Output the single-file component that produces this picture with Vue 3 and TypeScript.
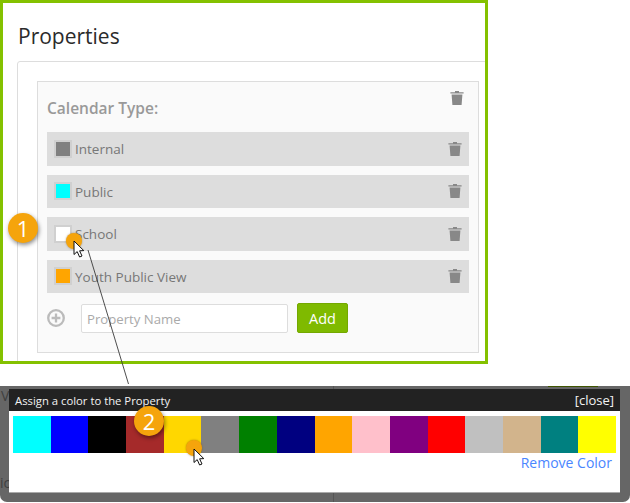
<script setup lang="ts">
const rows: { name: string; color: string }[] = [
  { name: 'Internal', color: '#808080' },
  { name: 'Public', color: '#00ffff' },
  { name: 'School', color: '#ffffff' },
  { name: 'Youth Public View', color: '#ffa500' },
]
const colors: string[] = [
  '#00ffff', '#0000ff', '#000000', '#a52a2a', '#ffd700', '#808080', '#008000', '#000080',
  '#ffa500', '#ffc0cb', '#800080', '#ff0000', '#c0c0c0', '#d2b48c', '#008080', '#ffff00',
]
const trash = 'M5 2.2 V1 H9 V2.2 H13.6 V3.6 H0.4 V2.2 Z M1.6 4.6 H12.4 L11.6 15 H2.4 Z'
const cursor = 'M0 0 L0 13.5 L3.2 10.6 L5.6 16 L8 15 L5.6 9.8 L9.8 9.6 Z'
</script>

<template>
  <div class="page">
    <section class="frame">
      <h1 class="title">Properties</h1>
      <div class="panel">
        <div class="inner">
          <div class="head">
            <h2 class="heading">Calendar Type:</h2>
            <svg class="trash" viewBox="0 0 14 16"><path :d="trash" /></svg>
          </div>
          <div class="rows">
            <div v-for="r in rows" :key="r.name" class="row">
              <span class="swatch" :style="{ background: r.color }"></span>
              <span class="row-name">{{ r.name }}</span>
              <svg class="trash" viewBox="0 0 14 16"><path :d="trash" /></svg>
            </div>
          </div>
          <div class="add">
            <svg class="plus" viewBox="0 0 18 18">
              <circle cx="9" cy="9" r="7.8" />
              <path d="M9 4.6 V13.4 M4.6 9 H13.4" />
            </svg>
            <div class="input">Property Name</div>
            <button class="btn" type="button">Add</button>
          </div>
        </div>
      </div>
    </section>

    <section class="overlay">
      <span class="behind-a">V</span>
      <span class="behind-b">ic</span>
      <span class="behind-line"></span>
      <span class="behind-btn"></span>
      <div class="window">
        <header class="bar">
          <span class="bar-title">Assign a color to the Property</span>
          <span class="close">[close]</span>
        </header>
        <div class="body">
          <div class="palette">
            <span v-for="c in colors" :key="c" class="cell" :style="{ background: c }"></span>
          </div>
          <div class="remove">Remove Color</div>
        </div>
      </div>
    </section>

    <svg class="leader" viewBox="0 0 630 503">
      <line x1="88" y1="250" x2="128.5" y2="384" />
    </svg>
    <span class="badge badge-1">1</span>
    <span class="badge badge-2">2</span>
    <span class="dot dot-1"></span>
    <span class="dot dot-2"></span>
    <svg class="cursor cursor-1" viewBox="-1 -1 12 18"><path :d="cursor" /></svg>
    <svg class="cursor cursor-2" viewBox="-1 -1 12 18"><path :d="cursor" /></svg>
  </div>
</template>

<style scoped>
.page {
  position: relative;
  width: 630px;
  height: 503px;
  overflow: hidden;
  background: #fff;
  font-family: "Open Sans", "Liberation Sans", sans-serif;
}
.frame {
  box-sizing: border-box;
  width: 488px;
  height: 364px;
  border: 3px solid #84c100;
  overflow: hidden;
  padding: 0 0 0 14px;
}
.title {
  margin: 0;
  height: 58px;
  padding: 18px 0 0 1px;
  box-sizing: border-box;
  font-size: 21px;
  line-height: 30px;
  font-weight: 500;
  color: #2b2b2b;
}
.panel {
  box-sizing: border-box;
  width: 480px;
  height: 320px;
  border: 1px solid #ddd;
  border-radius: 3px;
  padding: 19px;
}
.inner {
  box-sizing: border-box;
  width: 442px;
  height: 272px;
  border: 1px solid #ddd;
  background: #fafafa;
  padding: 0 9px;
}
.head {
  display: flex;
  justify-content: space-between;
  height: 50px;
}
.heading {
  margin: 0;
  padding-top: 15px;
  font-size: 15.5px;
  line-height: 22px;
  font-weight: 600;
  color: #999;
}
.head .trash {
  margin: 8px 5px 0 0;
}
.trash {
  width: 14px;
  height: 16px;
  flex: none;
}
.trash path {
  fill: #888;
}
.rows {
  display: flex;
  flex-direction: column;
  gap: 9px;
}
.row {
  display: flex;
  align-items: center;
  height: 33.5px;
  background: #ddd;
  padding: 0 7px;
  width: 422px;
  box-sizing: border-box;
}
.swatch {
  box-sizing: border-box;
  width: 18px;
  height: 18px;
  border: 2px solid #d0d0d0;
  flex: none;
}
.row-name {
  margin-left: 3px;
  padding-top: 1px;
  font-size: 13.5px;
  color: #777;
  flex: 1;
}
.add {
  display: flex;
  align-items: center;
  margin-top: 10px;
}
.plus {
  width: 18px;
  height: 18px;
  flex: none;
}
.plus circle,
.plus path {
  fill: none;
  stroke: #bbb;
  stroke-width: 2.3;
}
.input {
  box-sizing: border-box;
  width: 207px;
  height: 29px;
  margin-left: 16px;
  padding-left: 5px;
  border: 1px solid #ddd;
  border-radius: 2px;
  background: #fff;
  font-size: 13.2px;
  line-height: 28px;
  color: #aaa;
}
.btn {
  box-sizing: border-box;
  width: 51px;
  height: 30px;
  margin-left: 9px;
  border: 1px solid #74a800;
  border-radius: 2px;
  background: #7fba00;
  color: #fff;
  padding: 0;
  font-family: inherit;
  font-size: 14.5px;
  font-weight: 400;
}
.overlay {
  position: relative;
  box-sizing: border-box;
  height: 116px;
  margin-top: 22px;
  padding: 3px 10px 10px 9px;
  background: #666;
  border-radius: 0 0 7px 7px;
}
.behind-a,
.behind-b {
  position: absolute;
  left: 1px;
  font-size: 14px;
  color: #3f3f3f;
}
.behind-a {
  top: 0;
}
.behind-b {
  top: 87px;
  left: 0;
}
.behind-line {
  position: absolute;
  left: 333px;
  top: 0;
  bottom: 0;
  width: 1px;
  background: #555;
}
.behind-btn {
  position: absolute;
  left: 548px;
  top: 0;
  width: 50px;
  height: 1px;
  background: #3f5500;
}
.window {
  position: relative;
  height: 103px;
  border-bottom: 1px solid #aaa;
  background: #fff;
}
.bar {
  display: flex;
  justify-content: space-between;
  align-items: center;
  height: 22px;
  padding: 0 6px;
  background: #222;
  color: #f2f2f2;
  font-size: 11.3px;
  font-weight: 500;
}
.close {
  font-size: 13px;
  font-weight: 500;
}
.body {
  padding: 5px 4px 0;
}
.palette {
  display: flex;
  height: 37px;
}
.cell {
  flex: 1;
}
.remove {
  margin: 1px 4px 0 0;
  text-align: right;
  font-size: 14px;
  line-height: 18px;
  color: #4a86ff;
}
.leader {
  position: absolute;
  inset: 0;
  width: 630px;
  height: 503px;
  pointer-events: none;
}
.leader line {
  stroke: #3a3a3a;
  stroke-width: 0.9;
}
.badge {
  position: absolute;
  width: 30px;
  height: 30px;
  border-radius: 50%;
  background: #f5a40c;
  color: #fff;
  font-size: 22px;
  font-weight: 400;
  line-height: 30px;
  text-align: center;
  box-shadow: 1px 2px 4px rgba(0, 0, 0, 0.45);
}
.badge-1 {
  left: 8px;
  top: 213px;
}
.badge-2 {
  left: 134px;
  top: 406px;
}
.dot {
  position: absolute;
  width: 16px;
  height: 16px;
  border-radius: 50%;
  background: #f5a40c;
  box-shadow: 0 0 2px rgba(120, 80, 0, 0.6);
}
.dot-1 {
  left: 66px;
  top: 233px;
}
.dot-2 {
  left: 186px;
  top: 440px;
}
.cursor {
  position: absolute;
  width: 12px;
  height: 18px;
}
.cursor path {
  fill: #fff;
  stroke: #111;
  stroke-width: 1;
}
.cursor-1 {
  left: 73px;
  top: 240px;
}
.cursor-2 {
  left: 193px;
  top: 448px;
}
</style>
